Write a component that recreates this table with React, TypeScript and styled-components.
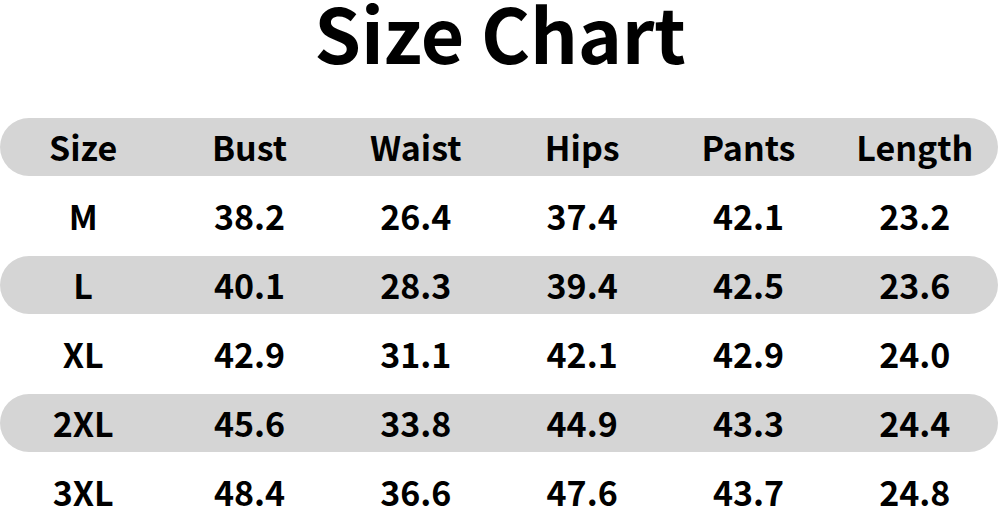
import React from "react";
import styled, { createGlobalStyle } from "styled-components";

const Global = createGlobalStyle`
  html, body { margin: 0; padding: 0; background: #ffffff; }
  body { font-family: "Noto Sans CJK SC", "Noto Sans", sans-serif; color: #000; overflow: hidden; }
`;

const Page = styled.div`
  width: 1000px;
  height: 508px;
  overflow: hidden;
  background: #fff;
`;

const Title = styled.h1`
  margin: 0;
  height: 118px;
  font-size: 75px;
  font-weight: 700;
  line-height: 64px;
  text-align: center;
  letter-spacing: -0.2px;
`;

const Table = styled.div`
  display: flex;
  flex-direction: column;
  gap: 11px;
`;

const Row = styled.div<{ $shaded: boolean }>`
  display: grid;
  grid-template-columns: repeat(6, 1fr);
  align-items: center;
  width: 998px;
  height: 58px;
  border-radius: 29px;
  background: ${(p) => (p.$shaded ? "#d5d5d5" : "transparent")};
`;

const Cell = styled.div`
  text-align: center;
  font-size: 34px;
  font-weight: 700;
  line-height: 1;
`;

const headers = ["Size", "Bust", "Waist", "Hips", "Pants", "Length"];
const data = [
  ["M", "38.2", "26.4", "37.4", "42.1", "23.2"],
  ["L", "40.1", "28.3", "39.4", "42.5", "23.6"],
  ["XL", "42.9", "31.1", "42.1", "42.9", "24.0"],
  ["2XL", "45.6", "33.8", "44.9", "43.3", "24.4"],
  ["3XL", "48.4", "36.6", "47.6", "43.7", "24.8"],
];

export default function App() {
  return (
    <Page>
      <Global />
      <Title>Size Chart</Title>
      <Table>
        <Row $shaded>
          {headers.map((h) => (
            <Cell key={h}>{h}</Cell>
          ))}
        </Row>
        {data.map((r, i) => (
          <Row key={r[0]} $shaded={i % 2 === 1}>
            {r.map((c, j) => (
              <Cell key={j}>{c}</Cell>
            ))}
          </Row>
        ))}
      </Table>
    </Page>
  );
}
